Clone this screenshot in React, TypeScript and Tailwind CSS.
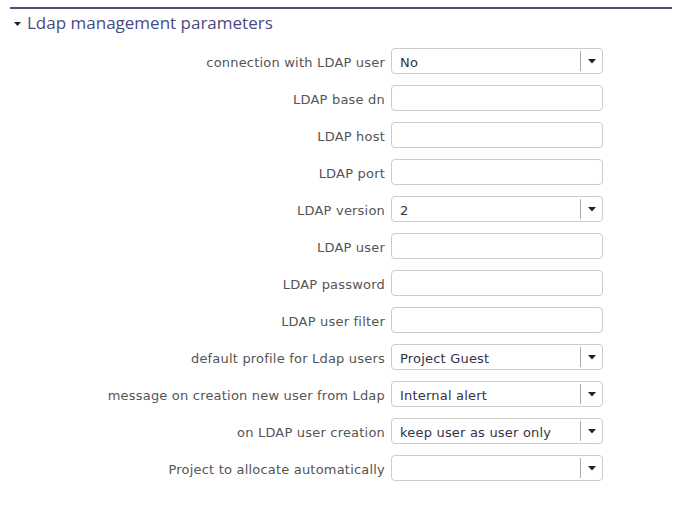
import React from "react";

type Row = { label: string; type: "select" | "text"; value?: string };

const rows: Row[] = [
  { label: "connection with LDAP user", type: "select", value: "No" },
  { label: "LDAP base dn", type: "text" },
  { label: "LDAP host", type: "text" },
  { label: "LDAP port", type: "text" },
  { label: "LDAP version", type: "select", value: "2" },
  { label: "LDAP user", type: "text" },
  { label: "LDAP password", type: "text" },
  { label: "LDAP user filter", type: "text" },
  { label: "default profile for Ldap users", type: "select", value: "Project Guest" },
  { label: "message on creation new user from Ldap", type: "select", value: "Internal alert" },
  { label: "on LDAP user creation", type: "select", value: "keep user as user only" },
  { label: "Project to allocate automatically", type: "select", value: "" },
];

function Arrow() {
  return (
    <svg width="8" height="5" viewBox="0 0 8 5" className="block">
      <path d="M0 0 H8 L4 4.5 Z" fill="#222" />
    </svg>
  );
}

export default function App() {
  return (
    <div className="w-[693px] h-[511px] bg-white pt-[7px] px-[10px]" style={{ fontFamily: '"DejaVu Sans", Verdana, sans-serif' }}>
      <div className="border-t-2 border-[#4e4f7e] w-[662px]" />
      <div className="flex items-center h-[28px] pl-[4px]">
        <svg width="7" height="4" viewBox="0 0 7 4" className="mr-[6px] mt-[1px]">
          <path d="M0 0 H7 L3.5 4 Z" fill="#222" />
        </svg>
        <span className="text-[17px] text-[#4a4a82]" style={{ fontFamily: '"Open Sans", sans-serif' }}>
          Ldap management parameters
        </span>
      </div>
      <div className="flex flex-col gap-[11px] mt-[11px]">
        {rows.map((r) => (
          <div key={r.label} className="flex items-center">
            <div className="w-[381px] text-right pr-[6px] pt-[3px] text-[13px] tracking-[0.2px] text-[#555]">{r.label}</div>
            <div className="w-[212px] h-[26px] border border-[#ccc] rounded-[4px] flex items-center bg-white">
              {r.type === "select" ? (
                <>
                  <span className="flex-1 pl-[8px] pt-[3px] text-[13px] tracking-[0.2px] text-[#333344]">{r.value}</span>
                  <div className="h-[20px] border-l border-[#aaa]" />
                  <div className="w-[21px] flex justify-center">
                    <Arrow />
                  </div>
                </>
              ) : null}
            </div>
          </div>
        ))}
      </div>
    </div>
  );
}
